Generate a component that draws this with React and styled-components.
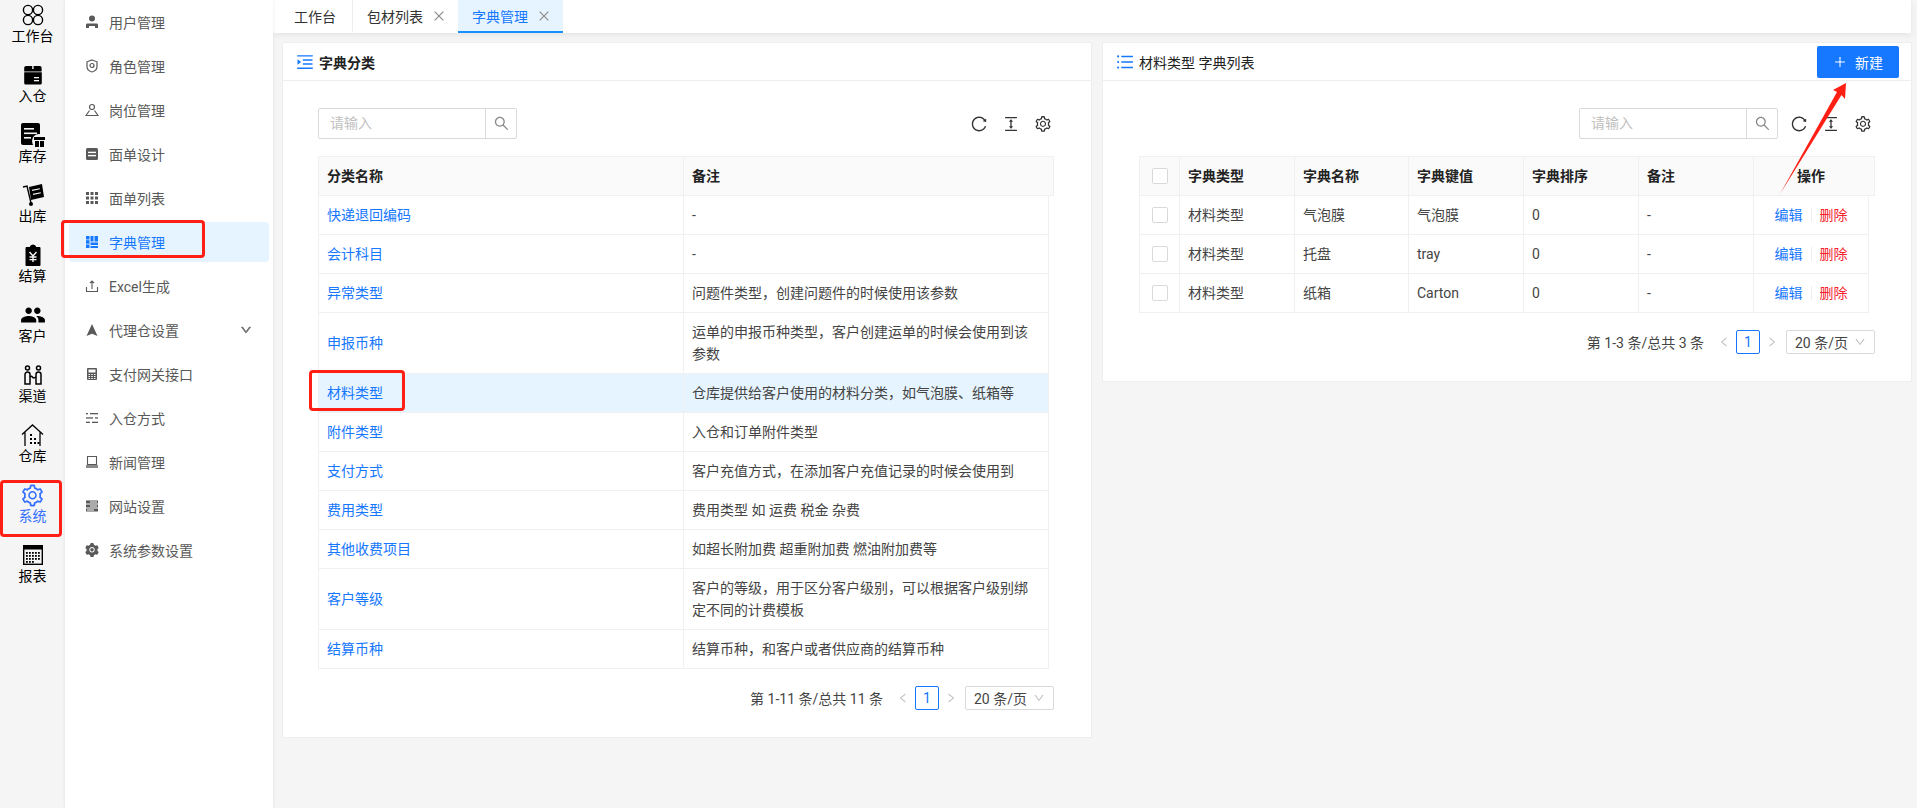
import styled, { createGlobalStyle } from "styled-components"
import {
    AiOutlineSetting,
    AiFillSetting,
    AiOutlineSearch,
    AiOutlineReload,
    AiOutlineColumnHeight,
    AiOutlinePlus,
    AiOutlineClose,
    AiOutlineLeft,
    AiOutlineRight,
    AiOutlineDown,
    AiOutlineMenuUnfold,
    AiOutlineUnorderedList,
} from "react-icons/ai"
import { MdPeople } from "react-icons/md"

const GlobalStyle = createGlobalStyle`
    html, body {
        margin: 0;
        height: 100%;
        overflow: hidden;
        background: #f5f5f5;
        font-family: Roboto, "Noto Sans CJK SC", sans-serif;
        font-size: 14px;
        color: #333;
    }
    *, *::after {
        box-sizing: border-box;
    }
`

const Page = styled.div`
    display: flex;
    height: 100vh;
`

const Rail = styled.nav`
    width: 65px;
    flex-shrink: 0;
    background: #f5f5f5;
`

const RailItem = styled.div`
    position: relative;
    height: 60px;
    padding-top: 4px;
    display: flex;
    flex-direction: column;
    align-items: center;
    color: ${(p) => (p.$active ? "#3370ff" : "#000")};

    &::after {
        content: ${(p) => (p.$active ? '""' : "none")};
        position: absolute;
        left: 0;
        top: 0;
        width: 62px;
        height: 57px;
        border: 3px solid #ff1f14;
        border-radius: 4px;
    }
`

const RailIcon = styled.div`
    height: 22px;
    display: flex;
    align-items: center;
    justify-content: center;
`

const RailLabel = styled.div`
    height: 20px;
    line-height: 20px;
`

const Menu = styled.nav`
    width: 208px;
    flex-shrink: 0;
    display: flex;
    flex-direction: column;
    background: #fff;
    box-shadow: 0 0 4px rgba(0, 0, 0, 0.08);
    z-index: 1;
`

const MenuItem = styled.div`
    position: relative;
    height: 40px;
    margin: 2px 4px;
    padding-left: 16px;
    display: flex;
    align-items: center;
    gap: 10px;
    border-radius: 4px;
    color: ${(p) => (p.$active ? "#1677ff" : "#595959")};
    background: ${(p) => (p.$active ? "#e6f4ff" : "transparent")};

    &::after {
        content: ${(p) => (p.$active ? '""' : "none")};
        position: absolute;
        left: -8px;
        top: -2px;
        width: 144px;
        height: 38px;
        border: 3px solid #ff1f14;
        border-radius: 4px;
    }
`

const MenuArrow = styled(AiOutlineDown)`
    margin-left: auto;
    margin-right: 17px;
    color: #666;
    stroke: #666;
    stroke-width: 60;
    font-size: 12px;
`

const MenuGear = styled(AiFillSetting)`
    margin: 0 -1px;
    font-size: 16px;
`

const Main = styled.main`
    flex: 1;
    min-width: 0;
    display: flex;
    flex-direction: column;
`

const TabBar = styled.div`
    height: 33px;
    margin-right: 6px;
    display: flex;
    background: #fff;
    box-shadow: 0 2px 6px rgba(0, 0, 0, 0.07);
`

const Tab = styled.div`
    display: flex;
    align-items: center;
    gap: 9px;
    padding: 0 12px 0 14px;
    color: ${(p) => (p.$active ? "#1677ff" : "#333")};
    background: ${(p) => (p.$active ? "#e6f4ff" : "#fff")};
    border-bottom: 2px solid ${(p) => (p.$active ? "#1890ff" : "transparent")};

    svg {
        font-size: 14px;
        color: #888;
    }
`

const HomeTab = styled(Tab)`
    padding: 0 16px 0 21px;
    border-right: 1px solid #eee;
`

const Board = styled.div`
    display: grid;
    grid-template-columns: 810px 810px;
    gap: 10px;
    align-items: start;
    padding: 9px 5px 0 9px;
`

const Card = styled.section`
    position: relative;
    background: #fff;
    border: 1px solid #eee;
    padding-bottom: 27px;
`

const CardHead = styled.header`
    height: 38px;
    padding: 0 12px;
    display: flex;
    align-items: center;
    gap: 4px;
    border-bottom: 1px solid #eee;
    color: #222;
    font-weight: ${(p) => (p.$bold ? 700 : 400)};

    > svg {
        font-size: 20px;
        color: #1677ff;
    }
`

const NewButton = styled.button`
    margin-left: auto;
    width: 82px;
    height: 32px;
    display: flex;
    align-items: center;
    justify-content: center;
    gap: 8px;
    border: none;
    border-radius: 2px;
    background: #1677ff;
    color: #fff;
    font: inherit;
`

const CardBody = styled.div`
    padding: 27px ${(p) => (p.$wide ? "36px" : "37px")} 0 ${(p) => (p.$wide ? "36px" : "35px")};
`

const Toolbar = styled.div`
    height: 31px;
    margin-bottom: 17px;
    display: flex;
    align-items: center;
    justify-content: ${(p) => (p.$right ? "flex-end" : "space-between")};
    gap: ${(p) => (p.$right ? "12px" : "0")};
    padding-right: ${(p) => (p.$right ? "1px" : "0")};
`

const Search = styled.div`
    width: 199px;
    height: 31px;
    display: flex;
    border: 1px solid #d9d9d9;
    border-radius: 2px;
`

const SearchInput = styled.div`
    flex: 1;
    padding-left: 11px;
    line-height: 29px;
    color: #bfbfbf;
`

const SearchButton = styled.div`
    width: 31px;
    display: flex;
    align-items: center;
    justify-content: center;
    border-left: 1px solid #d9d9d9;
    color: #888;
    font-size: 17px;
`

const ToolIcons = styled.div`
    display: flex;
    gap: 14px;
    font-size: 18px;
    color: #333;
    padding-right: 2px;

    svg {
        display: block;
    }
`

const HeadRow = styled.div`
    display: grid;
    grid-template-columns: ${(p) => p.$cols} 1fr;
    background: #fafafa;
    border: 1px solid #f0f0f0;
    color: #222;
    font-weight: 700;

    > *:nth-last-child(2) {
        border-right: none;
    }
`

const Row = styled.div`
    display: grid;
    grid-template-columns: ${(p) => p.$cols};
    width: ${(p) => p.$width}px;
    border: 1px solid #f0f0f0;
    border-top: none;
    background: ${(p) => (p.$selected ? "#e6f4ff" : "#fff")};
`

const Cell = styled.div`
    position: relative;
    display: flex;
    align-items: center;
    justify-content: ${(p) => (p.$center ? "center" : "flex-start")};
    padding: 8px;
    line-height: 22px;
    border-right: 1px solid #f0f0f0;
    color: ${(p) => (p.$link ? "#1677ff" : "#444")};

    &:last-child {
        border-right: none;
    }

    &::after {
        content: ${(p) => (p.$marked ? '""' : "none")};
        position: absolute;
        left: -10px;
        top: -4px;
        width: 96px;
        height: 41px;
        border: 3px solid #ff1f14;
        border-radius: 4px;
    }
`

const HeadCell = styled(Cell)`
    color: #222;
`

const Checkbox = styled.span`
    width: 16px;
    height: 16px;
    border: 1px solid #d9d9d9;
    border-radius: 2px;
    background: #fff;
`

const ActionLink = styled.span`
    color: ${(p) => (p.$danger ? "#f5222d" : "#1677ff")};
`

const ActionDivider = styled.span`
    width: 1px;
    height: 14px;
    margin: 0 8px;
    background: #eee;
`

const Pager = styled.div`
    margin-top: 17px;
    height: 24px;
    display: flex;
    align-items: center;
    justify-content: flex-end;
    color: #444;
`

const PagerArrow = styled.span`
    width: 24px;
    margin-left: ${(p) => (p.$first ? "8px" : "0")};
    display: flex;
    justify-content: center;
    color: #bbb;
    font-size: 12px;
`

const PageBox = styled.span`
    width: 24px;
    height: 24px;
    line-height: 22px;
    text-align: center;
    border: 1px solid #1677ff;
    border-radius: 2px;
    color: #1677ff;
`

const PageSize = styled.div`
    width: 89px;
    height: 24px;
    margin-left: 2px;
    padding: 0 8px;
    display: flex;
    align-items: center;
    justify-content: space-between;
    border: 1px solid #d9d9d9;
    border-radius: 2px;

    svg {
        color: #bbb;
        font-size: 12px;
    }
`

const ArrowMark = styled.svg`
    position: absolute;
    left: 671px;
    top: 36px;
    width: 80px;
    height: 120px;
    z-index: 2;
`

const Icon = ({ size = 14, box = "0 0 14 14", children }) => (
    <svg width={size} height={size} viewBox={box} fill="currentColor">
        {children}
    </svg>
)

const railIcons = {
    clover: (
        <Icon size={22} box="0 0 22 22">
            <g fill="none" stroke="currentColor" strokeWidth="1.4">
                <circle cx="6" cy="6" r="4.6" />
                <circle cx="16" cy="6" r="4.6" />
                <circle cx="6" cy="16" r="4.6" />
                <circle cx="16" cy="16" r="4.6" />
            </g>
        </Icon>
    ),
    inbound: (
        <Icon size={20} box="0 0 20 20">
            <path d="M3 1h14a2 2 0 0 1 1.6 1.6V6.4H1.2V2.6A2 2 0 0 1 3 1zM1.2 7.2h17.6V18a1.6 1.6 0 0 1-1.6 1.6H2.8A1.6 1.6 0 0 1 1.2 18z" />
            <rect x="9.2" y="1" width="1.4" height="3" fill="#f5f5f5" />
            <rect x="11" y="12" width="5" height="1.3" fill="#f5f5f5" />
            <rect x="11" y="15" width="5" height="1.3" fill="#f5f5f5" />
        </Icon>
    ),
    stock: (
        <Icon size={24} box="0 0 24 24">
            <rect x="0" y="0" width="19" height="22" rx="2" />
            <rect x="3" y="5" width="10" height="1.6" fill="#f5f5f5" />
            <rect x="3" y="9.5" width="13" height="1.6" fill="#f5f5f5" />
            <rect x="3" y="14" width="7" height="1.6" fill="#f5f5f5" />
            <circle cx="18" cy="18" r="7" fill="#f5f5f5" />
            <rect x="13" y="14" width="11" height="3" />
            <rect x="14" y="18" width="4" height="6" />
            <rect x="19" y="18" width="4" height="6" />
        </Icon>
    ),
    outbound: (
        <Icon size={22} box="0 0 22 22">
            <path d="M7 3l13-3 2 13-13 3z" />
            <rect x="10" y="5" width="8" height="1.2" fill="#f5f5f5" transform="rotate(-12 14 6)" />
            <rect x="11" y="9" width="8" height="1.2" fill="#f5f5f5" transform="rotate(-12 15 10)" />
            <path d="M1 3l4-1 4 17" fill="none" stroke="currentColor" strokeWidth="1.4" />
            <circle cx="9" cy="20" r="2" />
        </Icon>
    ),
    settle: (
        <Icon size={22} box="0 0 22 22">
            <path d="M4.5 3h3.2a3.4 3.4 0 0 1 6.6 0h3.2a1 1 0 0 1 1 1v17a1 1 0 0 1-1 1h-13a1 1 0 0 1-1-1V4a1 1 0 0 1 1-1z" />
            <path d="M7.5 8l3.5 4 3.5-4M11 12v6M7.5 13h7M7.5 15.6h7" fill="none" stroke="#f5f5f5" strokeWidth="1.4" />
        </Icon>
    ),
    channel: (
        <Icon size={20} box="0 0 20 20">
            <g fill="none" stroke="currentColor" strokeWidth="1.5">
                <circle cx="4.5" cy="3" r="2" />
                <circle cx="15.5" cy="3" r="2" />
                <path d="M2 19V9.5a2.5 2.5 0 0 1 5 0V19zM13 19V9.5a2.5 2.5 0 0 1 5 0V19z" />
                <path d="M7 12c1.5-1.6 2-.2 3 .6s1.600.4 3-.8" />
            </g>
        </Icon>
    ),
    warehouse: (
        <Icon size={23} box="0 0 23 23">
            <path d="M1 10.500L11.500 1 22 10.500M4 8.500V22M19 8.500V22" fill="none" stroke="currentColor" strokeWidth="1.3" />
            <g>
                <rect x="9" y="10" width="2" height="2" />
                <rect x="9" y="14" width="2" height="2" />
                <rect x="9" y="18" width="2" height="2" />
                <rect x="13" y="14" width="2" height="2" />
                <rect x="13" y="18" width="2" height="2" />
                <rect x="16.500" y="18" width="2" height="2" />
            </g>
        </Icon>
    ),
    report: (
        <Icon size={20} box="0 0 20 20">
            <rect x="0.700" y="0.700" width="18.600" height="18.600" fill="none" stroke="currentColor" strokeWidth="1.4" />
            <rect x="1" y="1" width="18" height="3.500" />
            {[8, 11, 14, 17].map((y) =>
                [4, 7, 10, 13, 16].map((x) =>
                    y === 17 && x > 10 ? null : <rect key={`${x}-${y}`} x={x - 1} y={y - 1} width="1.800" height="1.800" />
                )
            )}
        </Icon>
    ),
}

const menuIcons = {
    user: (
        <Icon>
            <circle cx="7" cy="3.500" r="3" />
            <path d="M2 8.500h10a1.500 1.500 0 0 1 1 1.300V13h-3v-2H4v2H1V9.800a1.500 1.500 0 0 1 1-1.300z" />
        </Icon>
    ),
    role: (
        <Icon>
            <path d="M7 1l5 1.800v4.700c0 2.800-2.200 4.700-5 5.500-2.800-.8-5-2.700-5-5.500V2.800z" fill="none" stroke="currentColor" strokeWidth="1.200" />
            <circle cx="7" cy="6.500" r="2" fill="none" stroke="currentColor" strokeWidth="1.200" />
        </Icon>
    ),
    post: (
        <Icon>
            <g fill="none" stroke="currentColor" strokeWidth="1.200">
                <circle cx="7" cy="4" r="2.500" />
                <path d="M4.500 7.500L1 12.500h12L9.500 7.500" />
            </g>
        </Icon>
    ),
    form: (
        <Icon>
            <rect x="1" y="1" width="12" height="12" rx="1.500" />
            <rect x="3" y="4.700" width="8" height="1.400" fill="#fff" />
            <rect x="3" y="7.900" width="8" height="1.400" fill="#fff" />
        </Icon>
    ),
    grid: (
        <Icon>
            {[1, 5.500, 10].map((y) =>
                [1, 5.500, 10].map((x) => <rect key={`${x}-${y}`} x={x} y={y} width="3" height="3" />)
            )}
        </Icon>
    ),
    dict: (
        <Icon>
            <rect x="1" y="1" width="3.500" height="3.500" />
            <rect x="1" y="5.200" width="3.500" height="3.500" />
            <rect x="1" y="9.500" width="3.500" height="3.500" />
            <rect x="5.500" y="1" width="3" height="5.500" />
            <rect x="9.500" y="1" width="3.500" height="5.500" />
            <rect x="5.500" y="7.500" width="7.500" height="2.500" />
            <rect x="5.500" y="11" width="7.500" height="2" />
        </Icon>
    ),
    upload: (
        <Icon>
            <path d="M1.500 8v4.500h11V8M7 10V2M4.800 4.200L7 2l2.200 2.200" fill="none" stroke="currentColor" strokeWidth="1.100" />
        </Icon>
    ),
    nav: (
        <Icon>
            <path d="M7 1l5.500 12L7 10.800 1.500 13z" />
        </Icon>
    ),
    calc: (
        <Icon>
            <rect x="2" y="1" width="10" height="12" rx="1" />
            <rect x="3.500" y="2.500" width="7" height="3" fill="#fff" />
            {[7, 9, 11].map((y) =>
                [3.500, 6.200, 9].map((x) => <rect key={`${x}-${y}`} x={x} y={y} width="1.500" height="1" fill="#fff" />)
            )}
        </Icon>
    ),
    lines: (
        <Icon>
            <rect x="1" y="2" width="2" height="1.300" />
            <rect x="5" y="2" width="8" height="1.300" />
            <rect x="1" y="6.300" width="7" height="1.300" />
            <rect x="10" y="6.300" width="3" height="1.300" />
            <rect x="1" y="10.700" width="4" height="1.300" />
            <rect x="7" y="10.700" width="6" height="1.300" />
        </Icon>
    ),
    news: (
        <Icon>
            <path d="M2.500 1.500h9v8h-9z" fill="none" stroke="currentColor" strokeWidth="1.100" />
            <rect x="1" y="10" width="12" height="3" opacity="0.7" />
        </Icon>
    ),
    site: (
        <Icon>
            <rect x="1" y="1.500" width="12" height="3" />
            <rect x="1" y="5.500" width="12" height="3" />
            <rect x="1" y="9.500" width="12" height="3" />
            <rect x="5" y="2.500" width="7" height="1" fill="#fff" />
            <rect x="5" y="6.500" width="7" height="1" fill="#fff" />
            <rect x="2" y="10.500" width="7" height="1" fill="#fff" />
        </Icon>
    ),
}

const railItems = [
    { label: "工作台", icon: railIcons.clover },
    { label: "入仓", icon: railIcons.inbound },
    { label: "库存", icon: railIcons.stock },
    { label: "出库", icon: railIcons.outbound },
    { label: "结算", icon: railIcons.settle },
    { label: "客户", icon: <MdPeople size={26} /> },
    { label: "渠道", icon: railIcons.channel },
    { label: "仓库", icon: railIcons.warehouse },
    { label: "系统", icon: <AiOutlineSetting size={25} />, active: true },
    { label: "报表", icon: railIcons.report },
]

const menuItems = [
    { label: "用户管理", icon: menuIcons.user },
    { label: "角色管理", icon: menuIcons.role },
    { label: "岗位管理", icon: menuIcons.post },
    { label: "面单设计", icon: menuIcons.form },
    { label: "面单列表", icon: menuIcons.grid },
    { label: "字典管理", icon: menuIcons.dict, active: true },
    { label: "Excel生成", icon: menuIcons.upload },
    { label: "代理仓设置", icon: menuIcons.nav, more: true },
    { label: "支付网关接口", icon: menuIcons.calc },
    { label: "入仓方式", icon: menuIcons.lines },
    { label: "新闻管理", icon: menuIcons.news },
    { label: "网站设置", icon: menuIcons.site },
    { label: "系统参数设置", icon: <MenuGear /> },
]

const categories = [
    ["快递退回编码", "-"],
    ["会计科目", "-"],
    ["异常类型", "问题件类型，创建问题件的时候使用该参数"],
    ["申报币种", "运单的申报币种类型，客户创建运单的时候会使用到该参数"],
    ["材料类型", "仓库提供给客户使用的材料分类，如气泡膜、纸箱等"],
    ["附件类型", "入仓和订单附件类型"],
    ["支付方式", "客户充值方式，在添加客户充值记录的时候会使用到"],
    ["费用类型", "费用类型 如 运费 税金 杂费"],
    ["其他收费项目", "如超长附加费 超重附加费 燃油附加费等"],
    ["客户等级", "客户的等级，用于区分客户级别，可以根据客户级别绑定不同的计费模板"],
    ["结算币种", "结算币种，和客户或者供应商的结算币种"],
]

const entries = [
    ["材料类型", "气泡膜", "气泡膜", "0", "-"],
    ["材料类型", "托盘", "tray", "0", "-"],
    ["材料类型", "纸箱", "Carton", "0", "-"],
]

const leftCols = "365px 364px"
const rightCols = "40px 115px 114px 115px 115px 115px 114px"

const Pagination = ({ summary }) => (
    <Pager>
        {summary}
        <PagerArrow $first>
            <AiOutlineLeft />
        </PagerArrow>
        <PageBox>1</PageBox>
        <PagerArrow>
            <AiOutlineRight />
        </PagerArrow>
        <PageSize>
            20 条/页
            <AiOutlineDown />
        </PageSize>
    </Pager>
)

const TableTools = () => (
    <ToolIcons>
        <AiOutlineReload />
        <AiOutlineColumnHeight />
        <AiOutlineSetting />
    </ToolIcons>
)

const SearchBox = () => (
    <Search>
        <SearchInput>请输入</SearchInput>
        <SearchButton>
            <AiOutlineSearch />
        </SearchButton>
    </Search>
)

const App = () => {
    return (
        <Page>
            <GlobalStyle />
            <Rail>
                {railItems.map((item) => (
                    <RailItem key={item.label} $active={item.active}>
                        <RailIcon>{item.icon}</RailIcon>
                        <RailLabel>{item.label}</RailLabel>
                    </RailItem>
                ))}
            </Rail>
            <Menu>
                {menuItems.map((item) => (
                    <MenuItem key={item.label} $active={item.active}>
                        {item.icon}
                        {item.label}
                        {item.more && <MenuArrow />}
                    </MenuItem>
                ))}
            </Menu>
            <Main>
                <TabBar>
                    <HomeTab>工作台</HomeTab>
                    <Tab>
                        包材列表
                        <AiOutlineClose />
                    </Tab>
                    <Tab $active>
                        字典管理
                        <AiOutlineClose />
                    </Tab>
                </TabBar>
                <Board>
                    <Card>
                        <CardHead $bold>
                            <AiOutlineMenuUnfold />
                            字典分类
                        </CardHead>
                        <CardBody>
                            <Toolbar>
                                <SearchBox />
                                <TableTools />
                            </Toolbar>
                            <HeadRow $cols={leftCols}>
                                <HeadCell>分类名称</HeadCell>
                                <HeadCell>备注</HeadCell>
                                <span />
                            </HeadRow>
                            {categories.map(([name, note]) => (
                                <Row key={name} $cols={leftCols} $width={731} $selected={name === "材料类型"}>
                                    <Cell $link $marked={name === "材料类型"}>
                                        {name}
                                    </Cell>
                                    <Cell>{note}</Cell>
                                </Row>
                            ))}
                            <Pagination summary="第 1-11 条/总共 11 条" />
                        </CardBody>
                    </Card>
                    <Card>
                        <CardHead>
                            <AiOutlineUnorderedList />
                            材料类型 字典列表
                            <NewButton>
                                <AiOutlinePlus size={14} />
                                新建
                            </NewButton>
                        </CardHead>
                        <CardBody $wide>
                            <Toolbar $right>
                                <SearchBox />
                                <TableTools />
                            </Toolbar>
                            <HeadRow $cols={rightCols}>
                                <HeadCell $center>
                                    <Checkbox />
                                </HeadCell>
                                <HeadCell>字典类型</HeadCell>
                                <HeadCell>字典名称</HeadCell>
                                <HeadCell>字典键值</HeadCell>
                                <HeadCell>字典排序</HeadCell>
                                <HeadCell>备注</HeadCell>
                                <HeadCell $center>操作</HeadCell>
                                <span />
                            </HeadRow>
                            {entries.map((entry) => (
                                <Row key={entry[1]} $cols={rightCols} $width={730}>
                                    <Cell $center>
                                        <Checkbox />
                                    </Cell>
                                    {entry.map((value, i) => (
                                        <Cell key={i}>{value}</Cell>
                                    ))}
                                    <Cell $center>
                                        <ActionLink>编辑</ActionLink>
                                        <ActionDivider />
                                        <ActionLink $danger>删除</ActionLink>
                                    </Cell>
                                </Row>
                            ))}
                            <Pagination summary="第 1-3 条/总共 3 条" />
                        </CardBody>
                        <ArrowMark viewBox="0 0 80 120">
                            <polygon points="6,115 63,13 59,11 72,4 71,20 67.500,16" fill="#ff1f14" />
                        </ArrowMark>
                    </Card>
                </Board>
            </Main>
        </Page>
    )
}

export default App
